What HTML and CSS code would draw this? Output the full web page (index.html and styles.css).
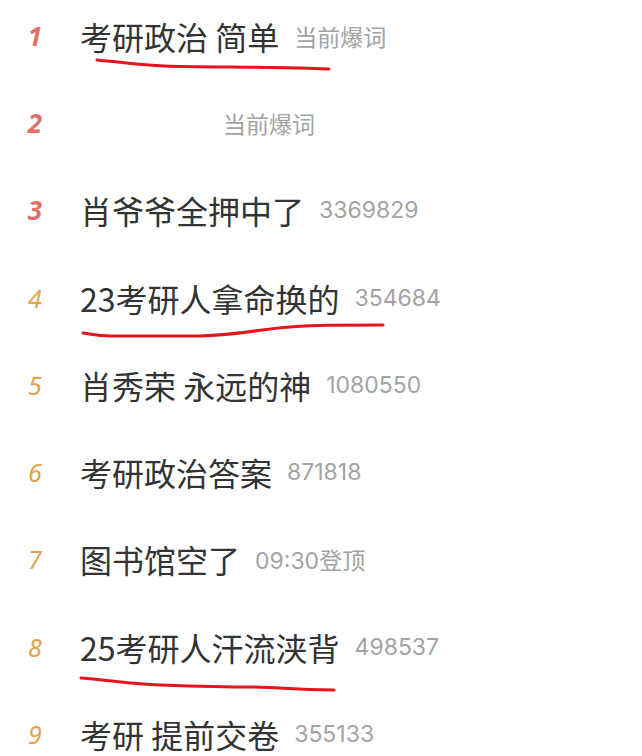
FILE: index.html
```html
<!DOCTYPE html>
<html lang="zh-CN">
<head>
<meta charset="utf-8">
<link rel="stylesheet" href="styles.css">
</head>
<body>
<div class="board">
  <ol class="list">
    <li class="row"><span class="rank top">1</span><span class="title">考研政治 简单</span><span class="meta">当前爆词</span></li>
    <li class="row"><span class="rank top">2</span><span class="title blank"></span><span class="meta">当前爆词</span></li>
    <li class="row"><span class="rank top">3</span><span class="title">肖爷爷全押中了</span><span class="meta">3369829</span></li>
    <li class="row"><span class="rank">4</span><span class="title">23考研人拿命换的</span><span class="meta">354684</span></li>
    <li class="row"><span class="rank">5</span><span class="title">肖秀荣 永远的神</span><span class="meta">1080550</span></li>
    <li class="row"><span class="rank">6</span><span class="title">考研政治答案</span><span class="meta">871818</span></li>
    <li class="row"><span class="rank">7</span><span class="title">图书馆空了</span><span class="meta">09:30登顶</span></li>
    <li class="row"><span class="rank">8</span><span class="title">25考研人汗流浃背</span><span class="meta">498537</span></li>
    <li class="row"><span class="rank">9</span><span class="title">考研 提前交卷</span><span class="meta">355133</span></li>
  </ol>
  <svg class="marks" width="642" height="756" viewBox="0 0 642 756" fill="none" stroke="#e8141c" stroke-width="3" stroke-linecap="round">
    <path d="M97 60 C 120 62, 140 65, 165 66 S 260 67, 300 68 L 329 69"/>
    <path d="M83 333 C 92 334, 96 336, 110 336 L 200 336 C 240 335, 260 329, 290 327 S 330 325, 383 325"/>
    <path d="M81 678 C 110 680, 130 684, 160 685 S 220 687, 250 687 S 290 690, 334 690"/>
  </svg>
</div>
</body>
</html>
```
FILE: styles.css
```css
html, body {
  margin: 0;
  padding: 0;
  background: #ffffff;
}

body {
  width: 642px;
  height: 756px;
  overflow: hidden;
  font-family: "Noto Sans CJK SC", "Noto Sans", sans-serif;
}

.board {
  position: relative;
  display: flow-root;
  width: 642px;
  height: 756px;
  overflow: hidden;
}

.list {
  list-style: none;
  margin: -8px 0 0 0;
  padding: 0;
}

.row {
  display: flex;
  align-items: center;
  height: 87.3px;
}

.rank {
  width: 70px;
  text-align: center;
  margin-right: 10px;
  font-family: "Noto Sans", "Liberation Sans", sans-serif;
  font-style: italic;
  font-size: 25px;
  color: #e3a24a;
}

.rank.top {
  font-weight: 700;
  font-size: 26px;
  color: #e46e66;
}

.title {
  font-size: 32px;
  color: #333333;
  white-space: nowrap;
}

.title.blank {
  width: 128px;
}

.meta {
  margin-left: 15px;
  font-family: "Inter", "Noto Sans CJK SC", sans-serif;
  font-size: 23px;
  color: #a3a3a3;
  white-space: nowrap;
}

.marks {
  position: absolute;
  left: 0;
  top: 0;
  pointer-events: none;
}
```
